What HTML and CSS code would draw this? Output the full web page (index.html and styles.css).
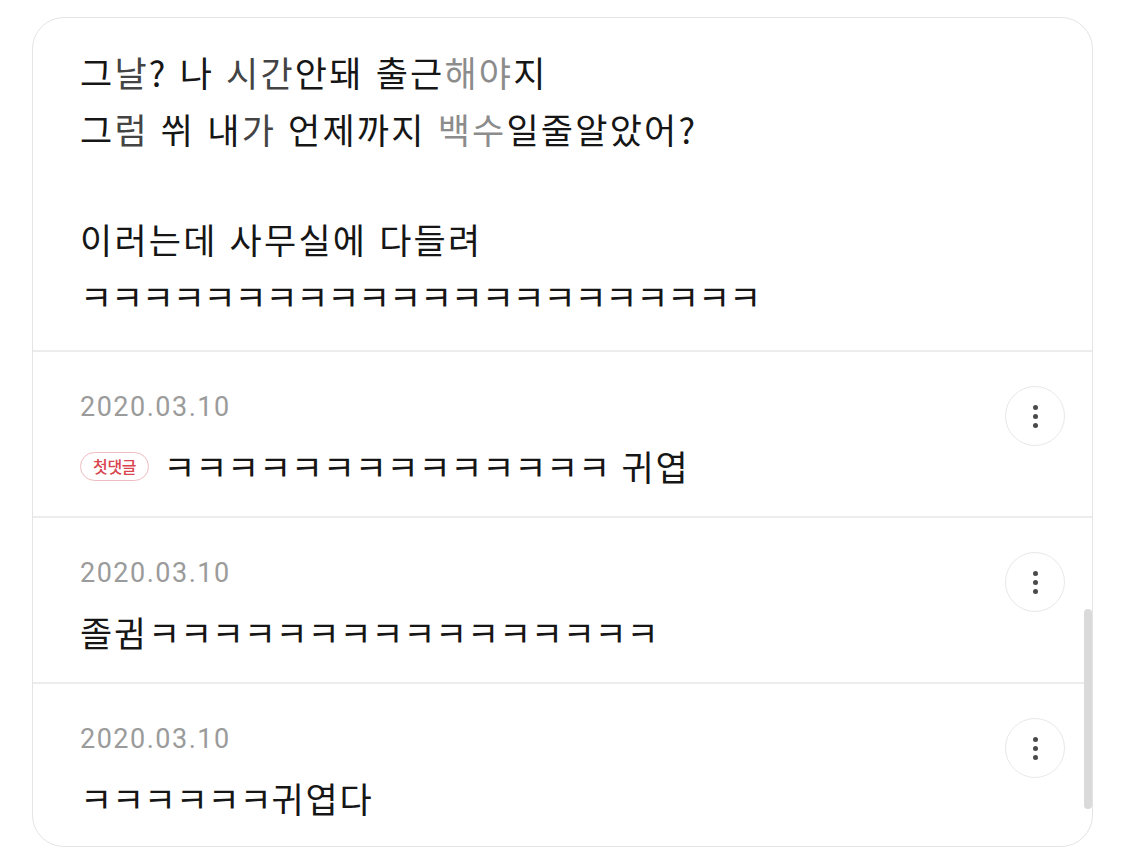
FILE: index.html
```html
<!DOCTYPE html>
<html lang="ko">
<head>
<meta charset="utf-8">
<link rel="stylesheet" href="styles.css">
</head>
<body>
<div class="card">
  <div class="post">
    <div class="line">그<span class="dim">날</span>? 나 <span class="dim">시간</span>안돼 출근<span class="dimmer">해야</span>지</div>
    <div class="line">그<span class="dim">럼</span> 쒸 내<span class="dim">가</span> 언제까지 <span class="dimmer">백수</span>일줄알았어?</div>
    <div class="blank"></div>
    <div class="line">이러는데 사무실에 다들려</div>
    <div class="line"><span class="k">ㅋㅋㅋㅋㅋㅋㅋㅋㅋㅋㅋㅋㅋㅋㅋㅋㅋㅋㅋㅋㅋㅋ</span></div>
  </div>
  <div class="comment">
    <div class="body">
      <div class="date">2020.03.10</div>
      <div class="text"><span class="badge">첫댓글</span><span class="k">ㅋㅋㅋㅋㅋㅋㅋㅋㅋㅋㅋㅋㅋㅋ</span>&nbsp;귀엽</div>
    </div>
    <div class="more"><span></span><span></span><span></span></div>
  </div>
  <div class="comment">
    <div class="body">
      <div class="date">2020.03.10</div>
      <div class="text">졸귐<span class="k">ㅋㅋㅋㅋㅋㅋㅋㅋㅋㅋㅋㅋㅋㅋㅋㅋ</span></div>
    </div>
    <div class="more"><span></span><span></span><span></span></div>
  </div>
  <div class="comment last">
    <div class="body">
      <div class="date">2020.03.10</div>
      <div class="text"><span class="k">ㅋㅋㅋㅋㅋㅋ</span>귀엽다</div>
    </div>
    <div class="more"><span></span><span></span><span></span></div>
  </div>
  <div class="scrollbar"></div>
</div>
</body>
</html>
```

FILE: styles.css
```css
html, body {
  margin: 0;
  padding: 0;
  background: #ffffff;
}

body {
  font-family: "Noto Sans CJK KR", "Noto Sans", sans-serif;
  color: #161616;
}

.card {
  position: relative;
  box-sizing: border-box;
  margin: 17px 0 0 32px;
  width: 1061px;
  height: 830px;
  border: 1.5px solid #e4e4e4;
  border-radius: 32px;
  background: #ffffff;
  overflow: hidden;
}

.post {
  padding: 25px 0 26px 47px;
  border-bottom: 2px solid #ececec;
}

.line {
  font-size: 35px;
  line-height: 57px;
  height: 57px;
  letter-spacing: 2.2px;
  white-space: nowrap;
}

.k {
  letter-spacing: -1.3px;
}

.text .k {
  letter-spacing: -0.3px;
}

.blank {
  height: 53px;
}

.dim {
  color: #444444;
}

.dimmer {
  color: #8c8c8c;
}

.comment {
  display: flex;
  align-items: flex-start;
  justify-content: space-between;
  height: 166px;
  box-sizing: border-box;
  padding: 36px 27px 0 47px;
  border-bottom: 2px solid #ececec;
}

.comment.last {
  border-bottom: none;
}

.body {
  display: flex;
  flex-direction: column;
  gap: 20px;
}

.date {
  font-family: Roboto, "Noto Sans", sans-serif;
  font-size: 27px;
  line-height: 38px;
  letter-spacing: 1.5px;
  color: #9b9b9b;
}

.text {
  display: flex;
  align-items: center;
  font-size: 35px;
  line-height: 40px;
  letter-spacing: 1.8px;
  white-space: nowrap;
}

.badge {
  display: inline-flex;
  align-items: center;
  justify-content: center;
  box-sizing: border-box;
  height: 29px;
  padding: 0 12px;
  margin-right: 14px;
  border: 1.5px solid #eebcc0;
  border-radius: 15px;
  color: #d8454f;
  font-size: 16px;
  font-weight: 500;
  line-height: 1;
  letter-spacing: -0.3px;
}

.more {
  display: flex;
  flex-direction: column;
  align-items: center;
  justify-content: center;
  gap: 4px;
  width: 60px;
  height: 60px;
  margin-top: -2px;
  box-sizing: border-box;
  border: 1.5px solid #e8e8e8;
  border-radius: 50%;
}

.more span {
  width: 5px;
  height: 5px;
  border-radius: 50%;
  background: #4a4a4a;
}

.scrollbar {
  position: absolute;
  right: 0;
  top: 591px;
  width: 8px;
  height: 200px;
  border-radius: 4px;
  background: #dadada;
}
```
